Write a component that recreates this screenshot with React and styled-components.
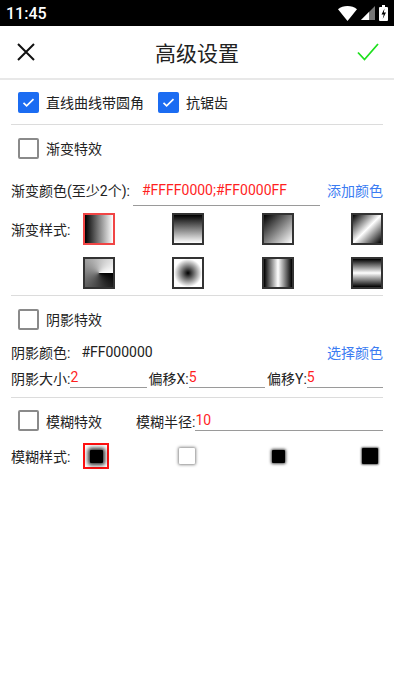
import React, { useState } from "react";
import styled, { createGlobalStyle } from "styled-components";

const GlobalStyle = createGlobalStyle`
    html, body {
        margin: 0;
        padding: 0;
        background: #fff;
    }
    body {
        font-family: Roboto, "Noto Sans CJK SC", sans-serif;
    }
`;

const Screen = styled.div`
    width: 394px;
    min-height: 700px;
    background: #fff;
    display: flex;
    flex-direction: column;
`;

const StatusBar = styled.div`
    height: 26px;
    background: #000;
    color: #fff;
    display: flex;
    align-items: center;
    justify-content: space-between;
    padding: 0 6px 0 6px;
    font-family: Roboto, sans-serif;
    font-weight: 500;
    font-size: 16px;
`;

const StatusIcons = styled.div`
    display: flex;
    align-items: center;
    gap: 4px;
`;

const Header = styled.div`
    height: 52px;
    display: flex;
    align-items: center;
    justify-content: space-between;
    padding: 0 14px 0 14px;
    border-bottom: 2px solid #e8e8e8;
`;

const Title = styled.div`
    font-family: "Noto Sans CJK SC", sans-serif;
    font-size: 21px;
    color: #222;
`;

const IconButton = styled.div`
    width: 24px;
    height: 24px;
    display: flex;
    align-items: center;
    justify-content: center;
`;

const Content = styled.div`
    padding: 0 11px;
    display: flex;
    flex-direction: column;
    font-family: Roboto, "Noto Sans CJK SC", sans-serif;
    font-size: 14px;
    color: #222;
`;

const Row = styled.div`
    height: ${(p) => p.h}px;
    display: flex;
    align-items: ${(p) => p.align || "center"};
    margin-top: ${(p) => p.mt || 0}px;
`;

const CheckRow = styled(Row)`
    padding-left: 7px;
`;

const Divider = styled.div`
    height: 1px;
    background: #dcdcdc;
    margin-top: ${(p) => p.mt || 0}px;
`;

const CheckBox = styled.div`
    width: 21px;
    height: 21px;
    box-sizing: border-box;
    border-radius: 2px;
    background: ${(p) => (p.checked ? "#1b6cf2" : "#fff")};
    border: ${(p) => (p.checked ? "none" : "2px solid #8a8a8a")};
    display: flex;
    align-items: center;
    justify-content: center;
    flex-shrink: 0;
`;

const CheckLabel = styled.span`
    margin-left: 7px;
    margin-right: ${(p) => p.mr || 0}px;
    font-size: 14px;
    color: #222;
    white-space: nowrap;
`;

const Label = styled.span`
    white-space: nowrap;
    color: #222;
    width: ${(p) => (p.w ? p.w + "px" : "auto")};
    flex-shrink: 0;
`;

const Value = styled.span`
    color: ${(p) => (p.red ? "#ff1f1f" : "#222")};
    margin-left: ${(p) => p.ml || 0}px;
    white-space: nowrap;
`;

const Field = styled.div`
    flex: ${(p) => p.grow || 1};
    height: ${(p) => p.h || 20}px;
    margin-left: ${(p) => p.ml || 0}px;
    margin-right: ${(p) => p.mr || 0}px;
    border-bottom: 1px solid #9a9a9a;
    display: flex;
    align-items: ${(p) => p.align || "center"};
    padding-left: ${(p) => p.pl || 0}px;
    color: #ff1f1f;
    font-size: 14px;
    white-space: nowrap;
`;

const LinkText = styled.span`
    color: #3b7cf2;
    white-space: nowrap;
    margin-left: auto;
`;

const SwatchRow = styled.div`
    display: flex;
    align-items: center;
    margin-top: ${(p) => p.mt || 0}px;
`;

const Swatches = styled.div`
    flex: 1;
    display: flex;
    justify-content: space-between;
`;

const Swatch = styled.div`
    width: 32px;
    height: 32px;
    box-sizing: border-box;
    border: 2px solid ${(p) => (p.selected ? "#f04545" : "#333")};
    background: ${(p) => p.bg};
`;

const BlurItems = styled.div`
    flex: 1;
    display: flex;
    justify-content: space-between;
    align-items: center;
`;

const BlurCell = styled.div`
    width: 26px;
    height: 26px;
    box-sizing: border-box;
    border: 2px solid ${(p) => (p.selected ? "#ff1010" : "transparent")};
    display: flex;
    align-items: center;
    justify-content: center;
`;

const BlurSquare = styled.div`
    width: ${(p) => p.size}px;
    height: ${(p) => p.size}px;
    background: ${(p) => p.bg};
    box-shadow: ${(p) => p.shadow};
    border-radius: 1px;
`;

const gradients = [
    "linear-gradient(to right, #000, #fff)",
    "linear-gradient(to bottom, #000, #fff)",
    "linear-gradient(to bottom right, #000, #fff)",
    "linear-gradient(135deg, #000, #fff 50%, #000)",
    "conic-gradient(from 90deg, #000, #fff)",
    "radial-gradient(circle closest-side, #000, #fff)",
    "linear-gradient(to right, #000, #fff 50%, #000)",
    "linear-gradient(to bottom, #000, #fff 50%, #000)",
];

const blurStyles = [
    { size: 13, bg: "#000", shadow: "0 0 4px 2px rgba(0,0,0,0.85)" },
    { size: 16, bg: "#fff", shadow: "0 0 3px 1px rgba(0,0,0,0.45)" },
    { size: 13, bg: "#000", shadow: "0 0 3px 1px rgba(0,0,0,0.7)" },
    { size: 16, bg: "#000", shadow: "0 0 2px 1px rgba(0,0,0,0.6)" },
];

function Check({ checked }) {
    return (
        <CheckBox checked={checked}>
            {checked && (
                <svg width="15" height="15" viewBox="0 0 24 24">
                    <path d="M4 12.5l5 5L20 6.5" fill="none" stroke="#fff" strokeWidth="2.6" />
                </svg>
            )}
        </CheckBox>
    );
}

export default function App() {
    const [selected, setSelected] = useState(0);
    const [blur, setBlur] = useState(0);

    return (
        <Screen>
            <GlobalStyle />
            <StatusBar>
                <span>11:45</span>
                <StatusIcons>
                    <svg width="19" height="15" viewBox="0 0 19 15">
                        <path d="M0 3.2C2.6 1.2 5.9 0 9.5 0s6.9 1.2 9.5 3.2L9.5 15z" fill="#fff" />
                    </svg>
                    <svg width="14" height="14" viewBox="0 0 14 14">
                        <path d="M14 0v14H0z" fill="#777" />
                        <path d="M8 6v8H0z" fill="#fff" />
                    </svg>
                    <svg width="9" height="16" viewBox="0 0 9 16">
                        <rect x="3" y="0" width="3" height="2" fill="#fff" />
                        <rect x="0" y="2" width="9" height="14" rx="1" fill="#fff" />
                        <path d="M5.5 3.5L2.5 9.5h2.2l-1 4.5 3.3-6.5H4.8z" fill="#000" />
                    </svg>
                </StatusIcons>
            </StatusBar>
            <Header>
                <IconButton>
                    <svg width="20" height="20" viewBox="0 0 20 20">
                        <path d="M2 2l16 16M18 2L2 18" stroke="#111" strokeWidth="2" />
                    </svg>
                </IconButton>
                <Title>高级设置</Title>
                <IconButton>
                    <svg width="22" height="20" viewBox="0 0 22 20">
                        <path d="M1 10.5l6.5 7L21 2" fill="none" stroke="#1ee01e" strokeWidth="1.8" />
                    </svg>
                </IconButton>
            </Header>
            <Content>
                <CheckRow h={44}>
                    <Check checked />
                    <CheckLabel mr={14}>直线曲线带圆角</CheckLabel>
                    <Check checked />
                    <CheckLabel>抗锯齿</CheckLabel>
                </CheckRow>
                <Divider />
                <CheckRow h={46}>
                    <Check />
                    <CheckLabel>渐变特效</CheckLabel>
                </CheckRow>
                <Row h={38}>
                    <Label>渐变颜色(至少2个):</Label>
                    <Field h={30} ml={3} mr={7} pl={9}>#FFFF0000;#FF0000FF</Field>
                    <LinkText>添加颜色</LinkText>
                </Row>
                <SwatchRow mt={4}>
                    <Label w={72}>渐变样式:</Label>
                    <Swatches>
                        {gradients.slice(0, 4).map((g, i) => (
                            <Swatch key={i} bg={g} selected={selected === i} onClick={() => setSelected(i)} />
                        ))}
                    </Swatches>
                </SwatchRow>
                <SwatchRow mt={12}>
                    <Label w={72} />
                    <Swatches>
                        {gradients.slice(4).map((g, i) => (
                            <Swatch key={i} bg={g} selected={selected === i + 4} onClick={() => setSelected(i + 4)} />
                        ))}
                    </Swatches>
                </SwatchRow>
                <Divider mt={6} />
                <CheckRow h={46}>
                    <Check />
                    <CheckLabel>阴影特效</CheckLabel>
                </CheckRow>
                <Row h={20}>
                    <Label>阴影颜色:</Label>
                    <Value ml={11}>#FF000000</Value>
                    <LinkText>选择颜色</LinkText>
                </Row>
                <Row h={26} align="flex-end">
                    <Label>阴影大小:</Label>
                    <Field h={21} mr={2}>2</Field>
                    <Label>偏移X:</Label>
                    <Field h={21} mr={2}>5</Field>
                    <Label>偏移Y:</Label>
                    <Field h={21}>5</Field>
                </Row>
                <Divider mt={9} />
                <CheckRow h={45}>
                    <Check />
                    <CheckLabel mr={34}>模糊特效</CheckLabel>
                    <Label>模糊半径:</Label>
                    <Field h={20}>10</Field>
                </CheckRow>
                <Row h={26}>
                    <Label w={72}>模糊样式:</Label>
                    <BlurItems>
                        {blurStyles.map((b, i) => (
                            <BlurCell key={i} selected={blur === i} onClick={() => setBlur(i)}>
                                <BlurSquare size={b.size} bg={b.bg} shadow={b.shadow} />
                            </BlurCell>
                        ))}
                    </BlurItems>
                </Row>
            </Content>
        </Screen>
    );
}
